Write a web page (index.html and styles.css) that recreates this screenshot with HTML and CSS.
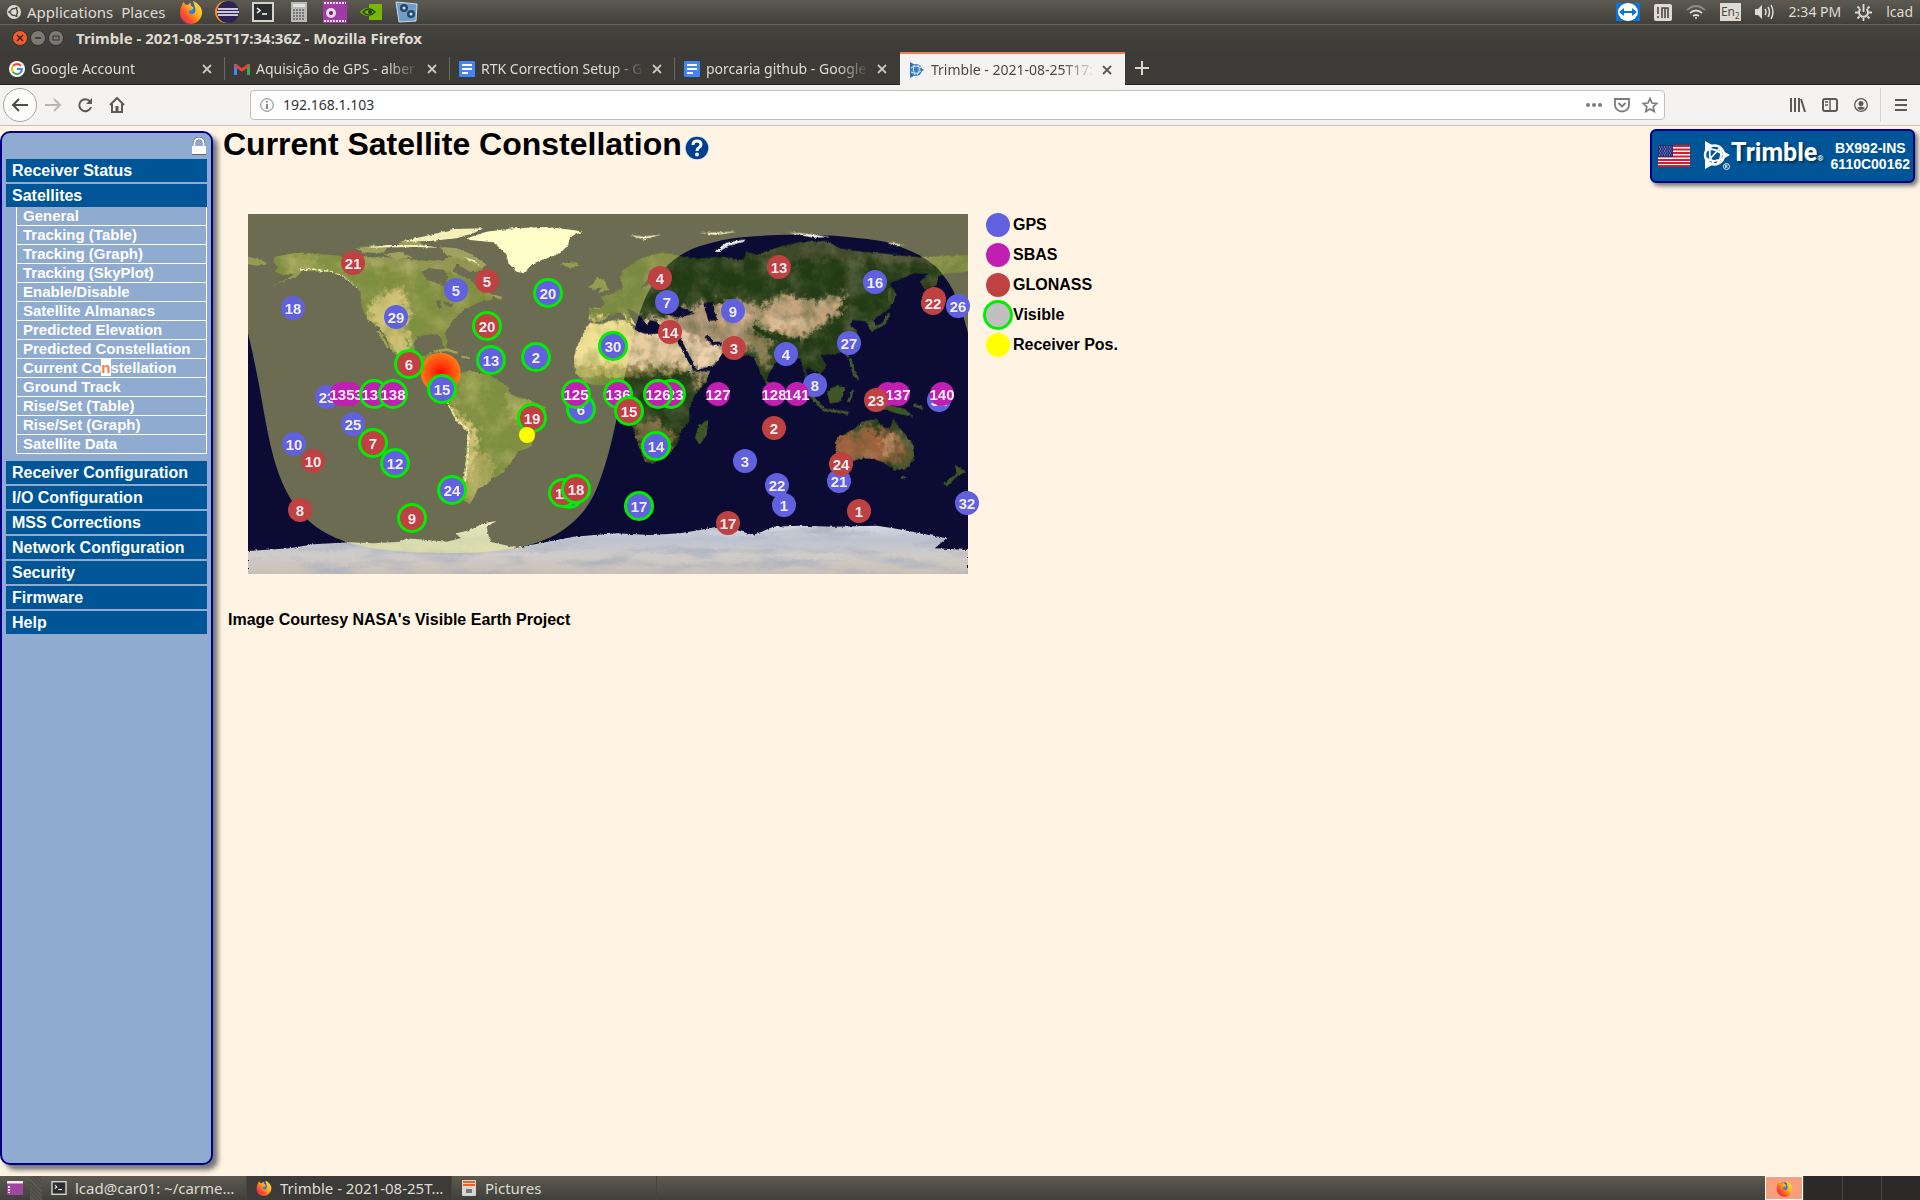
FILE: index.html
```html
<!DOCTYPE html>
<html lang="en">
<head>
<meta charset="utf-8">
<title>Trimble - 2021-08-25T17:34:36Z</title>
<link rel="stylesheet" href="styles.css">
</head>
<body>
<svg class="defs" width="0" height="0" aria-hidden="true">
  <defs>
    <radialGradient id="fxGlobe" cx=".5" cy=".4" r=".6"><stop offset="0" stop-color="#2a9bf0"/><stop offset="1" stop-color="#2b2aa8"/></radialGradient>
    <linearGradient id="fxFlame" x1="1" y1="0" x2="0" y2="1"><stop offset="0" stop-color="#fff04a"/><stop offset=".4" stop-color="#ffb01c"/><stop offset=".7" stop-color="#ff4b2b"/><stop offset="1" stop-color="#e0208a"/></linearGradient>
    <symbol id="firefox" viewBox="0 0 24 24">
      <circle cx="12" cy="12" r="9" fill="url(#fxGlobe)"/>
      <path d="M3 5 C3 3 5 2 5 2 C5 4 7 5 9 5 C10 3 12 3 12 3 C11 5 12 6 14 7 C15 9 13 10 11 10 C9 11 10 14 13 14 C16 14 17 11 16 8 C16 5 14 3 14 1 C19 3 24 8 23 14 C22 20 17 24 12 24 C6 24 1 19 1 13 C1 9 2 7 3 5Z" fill="url(#fxFlame)"/>
    </symbol>
    <symbol id="terminal" viewBox="0 0 22 20">
      <rect x="1" y="1" width="20" height="18" fill="#2c2f2e" stroke="#d3d3cd" stroke-width="2"/>
      <path d="M5 6l3 2.500-3 2.500M10 12h5" fill="none" stroke="#fff" stroke-width="1.500"/>
    </symbol>
    <symbol id="close" viewBox="0 0 12 12"><path d="M2 2l8 8M10 2l-8 8" stroke="currentColor" stroke-width="1.800" fill="none"/></symbol>
    <symbol id="docs" viewBox="0 0 16 16"><rect width="16" height="16" rx="1" fill="#4285f4"/><path d="M3 4h10M3 8h10M3 12h6" stroke="#fff" stroke-width="2"/></symbol>
  </defs>
</svg>

<header class="panel">
  <button class="panel-item"><svg width="14" height="14" viewBox="0 0 14 14"><circle cx="7" cy="7" r="7" fill="#dfdbd2"/><circle cx="7" cy="7" r="3.500" fill="none" stroke="#4b4a44" stroke-width="1.600"/><path d="M7 7L1 7M7 7l3.500-6M7 7l3.500 6" stroke="#dfdbd2" stroke-width="1"/><circle cx="2.400" cy="7" r="1.200" fill="#4b4a44"/><circle cx="9.400" cy="3" r="1.200" fill="#4b4a44"/><circle cx="9.400" cy="11" r="1.200" fill="#4b4a44"/></svg>Applications</button>
  <button class="panel-item">Places</button>
  <div class="launchers">
    <svg width="24" height="24"><use href="#firefox"/></svg>
    <svg width="24" height="24" viewBox="0 0 24 24"><circle cx="11" cy="12" r="11" fill="#f79421"/><circle cx="13" cy="12" r="11" fill="#2c2255"/><path d="M3 9h20M2 12h22M3 15h20" stroke="#fff" stroke-width="1.500"/></svg>
    <svg width="22" height="20"><use href="#terminal"/></svg>
    <svg width="18" height="22" viewBox="0 0 18 22"><rect x="1" y="1" width="16" height="20" fill="#b9b9b5"/><rect x="3" y="3" width="12" height="3" fill="#dfe3da"/><path d="M3 9h12M3 12h12M3 15h12M3 18h12" stroke="#777" stroke-width="2" stroke-dasharray="2 1"/></svg>
    <svg width="24" height="22" viewBox="0 0 24 22"><rect width="24" height="22" fill="#a13aa8"/><path d="M1 2h22M1 20h22" stroke="#f4dff4" stroke-width="2" stroke-dasharray="2 1"/><circle cx="8" cy="12" r="5" fill="#e9d9ea"/><circle cx="8" cy="12" r="2" fill="#6d1d75"/></svg>
    <svg width="22" height="16" viewBox="0 0 22 16"><rect x="9" width="13" height="16" fill="#76b900"/><path d="M0 8q7-8 17 0q-9 8-17 0z" fill="#76b900"/><path d="M3 8q6-6 12 0q-6 6-12 0z" fill="none" stroke="#25400a" stroke-width="1.500"/><circle cx="10" cy="8" r="2" fill="#25400a"/></svg>
    <svg width="24" height="23" viewBox="0 0 24 23"><path d="M1 1l21 2-1 17-17 1z" fill="#6f9dcb" stroke="#cfdbe6"/><circle cx="9" cy="7" r="4" fill="#26496b"/><circle cx="16" cy="13" r="4" fill="#26496b"/><circle cx="9" cy="7" r="1.500" fill="#cfe1f2"/><circle cx="16" cy="13" r="1.500" fill="#cfe1f2"/></svg>
  </div>
  <div class="tray">
    <svg width="24" height="18" viewBox="0 0 24 18"><rect width="24" height="18" fill="#0e74d8"/><ellipse cx="12" cy="9" rx="10" ry="9" fill="#fff"/><path d="M3 9l5-4v3h8V5l5 4-5 4v-3H8v3z" fill="#0e74d8"/></svg>
    <svg width="18" height="17" viewBox="0 0 18 17"><rect width="18" height="17" rx="2" fill="#dfdbd2"/><path d="M4 3v7M4 12v2M8 14V4h6v10M11 4v10" stroke="#4b4a44" stroke-width="1.600" fill="none"/></svg>
    <svg width="20" height="14" viewBox="0 0 20 14" fill="none" stroke-width="1.800"><path d="M1 5q9-8 18 0" stroke="#8d8a80"/><path d="M4 8q6-5 12 0" stroke="#dfdbd2"/><path d="M7 11q3-2 6 0" stroke="#dfdbd2"/><circle cx="10" cy="13" r="1" fill="#dfdbd2"/></svg>
    <span class="lang">En<sub>2</sub></span>
    <svg width="20" height="16" viewBox="0 0 20 16"><path d="M0 5h3l4-4v14l-4-4H0z" fill="#dfdbd2"/><path d="M10 5q2 3 0 6M13 3q3 5 0 10M16 1q4 7 0 14" fill="none" stroke="#dfdbd2" stroke-width="1.500"/></svg>
    <span>2:34 PM</span>
    <svg width="17" height="17" viewBox="0 0 17 17" stroke="#dfdbd2" fill="none"><path d="M5.500 5a4.500 4.500 0 1 0 6 0" stroke-width="2"/><path d="M8.500 0v8M8.500 14v3M0 8.500h3M14 8.500h3M2.500 2.500l2 2M14.500 2.500l-2 2M2.500 14.500l2-2M14.500 14.500l-2-2" stroke-width="1.800"/></svg>
    <span>lcad</span>
  </div>
</header>

<div class="titlebar">
  <button class="win win-close" aria-label="Close"><svg width="8" height="8"><path d="M1 1l6 6M7 1l-6 6" stroke="#4a1d0c" stroke-width="1.500"/></svg></button>
  <button class="win" aria-label="Minimize"><svg width="8" height="8"><path d="M1 4h6" stroke="#33322e" stroke-width="1.500"/></svg></button>
  <button class="win" aria-label="Maximize"><svg width="8" height="8"><rect x="1" y="2" width="6" height="4" fill="none" stroke="#33322e"/></svg></button>
  <strong>Trimble - 2021-08-25T17:34:36Z - Mozilla Firefox</strong>
</div>

<nav class="tabs" aria-label="Tabs">
  <button class="tab"><svg width="16" height="16" viewBox="0 0 16 16"><circle cx="8" cy="8" r="8" fill="#fff"/><g fill="none" stroke-width="2"><path d="M12 5A5 5 0 0 0 4 5" stroke="#ea4335"/><path d="M4 5A5 5 0 0 0 4 11" stroke="#fbbc05"/><path d="M4 11A5 5 0 0 0 11 12" stroke="#34a853"/><path d="M11 12A5 5 0 0 0 13 8H8" stroke="#4285f4"/></g></svg><span class="tab-text">Google Account</span><svg class="x" width="12" height="12"><use href="#close"/></svg></button>
  <button class="tab"><svg width="16" height="12" viewBox="0 0 16 12"><path d="M1.500 12V1" stroke="#4285f4" stroke-width="3"/><path d="M14.500 12V1" stroke="#34a853" stroke-width="3"/><path d="M1 2l7 5 7-5" stroke="#ea4335" stroke-width="3" fill="none"/></svg><span class="tab-text">Aquisição de GPS - alber</span><svg class="x" width="12" height="12"><use href="#close"/></svg></button>
  <button class="tab"><svg width="16" height="16"><use href="#docs"/></svg><span class="tab-text">RTK Correction Setup - G</span><svg class="x" width="12" height="12"><use href="#close"/></svg></button>
  <button class="tab"><svg width="16" height="16"><use href="#docs"/></svg><span class="tab-text">porcaria github - Google</span><svg class="x" width="12" height="12"><use href="#close"/></svg></button>
  <button class="tab active"><svg width="16" height="16" viewBox="0 0 16 16"><path d="M1 0l14 8-14 8z" fill="#2f6fb5"/><circle cx="7" cy="8" r="6" fill="#3d7fc4"/><path d="M2 6q5-4 10 0M2 10q5 3 10-1M5 3q-2 5 1 10M9 3q3 5-1 10" stroke="#dcecfa" fill="none"/></svg><span class="tab-text">Trimble - 2021-08-25T17:3</span><svg class="x" width="12" height="12"><use href="#close"/></svg></button>
  <button class="new-tab" aria-label="New tab"><svg width="14" height="14"><path d="M7 0v14M0 7h14" stroke="#d8d4cc" stroke-width="2"/></svg></button>
</nav>

<div class="toolbar">
  <button class="tool back" aria-label="Back"><svg width="18" height="16"><path d="M17 8H2M8 2L2 8l6 6" fill="none" stroke="#4b4b49" stroke-width="2"/></svg></button>
  <button class="tool" aria-label="Forward"><svg width="18" height="16"><path d="M1 8h15M10 2l6 6-6 6" fill="none" stroke="#b9b8b6" stroke-width="2"/></svg></button>
  <button class="tool" aria-label="Reload"><svg width="16" height="16"><path d="M13 4.500A6 6 0 1 0 14 10" fill="none" stroke="#5a5a58" stroke-width="2"/><path d="M15 1v6H9z" fill="#5a5a58"/></svg></button>
  <button class="tool" aria-label="Home"><svg width="16" height="16"><path d="M1 8l7-7 7 7M3 7v8h10V7" fill="none" stroke="#5a5a58" stroke-width="2"/><path d="M8 15V9" stroke="#5a5a58" stroke-width="3"/></svg></button>
  <div class="urlbar">
    <svg width="14" height="14" fill="none" stroke="#7b7b79"><circle cx="7" cy="7" r="6.300"/><path d="M7 6v5M7 3v1.500" stroke-width="1.800"/></svg>
    <input type="text" value="192.168.1.103" aria-label="Address">
    <svg width="16" height="4" fill="#7b7b79"><circle cx="2" cy="2" r="2"/><circle cx="8" cy="2" r="2"/><circle cx="14" cy="2" r="2"/></svg>
    <svg width="16" height="15" fill="none" stroke="#7b7b79" stroke-width="1.800"><path d="M1 1h14v6a7 6.500 0 0 1-14 0zM4.500 5L8 8.500 11.500 5"/></svg>
    <svg width="16" height="16" viewBox="0 0 16 16" fill="none" stroke="#7b7b79" stroke-width="1.700"><path d="M8 1.500l2 4.500 4.800.5-3.600 3.200 1 4.800L8 12l-4.200 2.500 1-4.800L1.200 6.500 6 6z"/></svg>
  </div>
  <div class="tools-right">
    <svg width="16" height="14" stroke="#5a5a58" stroke-width="2"><path d="M1 0v14M5 0v14M9 0v14M11 1l4 13"/></svg>
    <svg width="16" height="14" fill="none" stroke="#5a5a58"><rect x="1" y="1" width="14" height="12" rx="2" stroke-width="2"/><path d="M8 1v12M3 4h3M3 7h3" stroke-width="1.400"/></svg>
    <svg width="14" height="14"><circle cx="7" cy="7" r="6.300" fill="none" stroke="#5a5a58" stroke-width="1.300"/><circle cx="7" cy="5.500" r="2.500" fill="#5a5a58"/><path d="M3 10q4-3 8 0-4 4-8 0" fill="#5a5a58"/></svg>
    <button class="menu" aria-label="Menu"><svg width="12" height="12"><path d="M0 1h12M0 6h12M0 11h12" stroke="#5a5a58" stroke-width="2"/></svg></button>
  </div>
</div>

<main class="page">
  <nav class="sidebar" aria-label="Receiver menu">
    <svg class="lock" width="14" height="18" viewBox="0 0 14 18"><path d="M2.500 9V6a4.500 4.500 0 0 1 9 0v3" fill="none" stroke="#555" stroke-width="3"/><path d="M2.500 9V6a4.500 4.500 0 0 1 9 0v3" fill="none" stroke="#fff" stroke-width="2"/><path d="M0 9h14v8H0z" fill="#fff"/><path d="M0 17.500h14" stroke="#666"/></svg>
    <a class="menu-main" href="#">Receiver Status</a>
    <a class="menu-main" href="#">Satellites</a>
    <div class="submenu">
      <a href="#">General</a>
      <a href="#">Tracking (Table)</a>
      <a href="#">Tracking (Graph)</a>
      <a href="#">Tracking (SkyPlot)</a>
      <a href="#">Enable/Disable</a>
      <a href="#">Satellite Almanacs</a>
      <a href="#">Predicted Elevation</a>
      <a href="#">Predicted Constellation</a>
      <a href="#">Current Co<mark>n</mark>stellation</a>
      <a href="#">Ground Track</a>
      <a href="#">Rise/Set (Table)</a>
      <a href="#">Rise/Set (Graph)</a>
      <a href="#">Satellite Data</a>
    </div>
    <a class="menu-main" href="#">Receiver Configuration</a>
    <a class="menu-main" href="#">I/O Configuration</a>
    <a class="menu-main" href="#">MSS Corrections</a>
    <a class="menu-main" href="#">Network Configuration</a>
    <a class="menu-main" href="#">Security</a>
    <a class="menu-main" href="#">Firmware</a>
    <a class="menu-main" href="#">Help</a>
  </nav>

  <section class="content">
    <div class="heading">
      <h1>Current Satellite Constellation</h1>
      <a href="#" aria-label="Help"><svg width="26" height="26" viewBox="0 0 26 26"><circle cx="13" cy="13" r="12.500" fill="#e6e9f2"/><circle cx="13" cy="13" r="11.300" fill="#003f8f"/><path d="M9 10q0-4 4-4t4 3.500q0 2-2.500 3.500-1.500 1-1.500 3" fill="none" stroke="#fff" stroke-width="3"/><circle cx="13" cy="19.500" r="1.900" fill="#fff"/></svg></a>
    </div>

    <div class="map-row">
      <div class="map">
        <svg class="earth" viewBox="0 0 2160 1080" role="img" aria-label="World map">
          <defs>
            <filter id="coast" x="0" y="0" width="100%" height="100%"><feTurbulence type="fractalNoise" baseFrequency=".09" numOctaves="4" seed="4" result="n"/><feDisplacementMap in="SourceGraphic" in2="n" scale="9" xChannelSelector="R" yChannelSelector="G"/></filter>
            <filter id="soft" x="-10%" y="-10%" width="120%" height="120%"><feTurbulence type="fractalNoise" baseFrequency=".05" numOctaves="4" seed="9" result="n"/><feGaussianBlur in="SourceGraphic" stdDeviation="6" result="b"/><feDisplacementMap in="b" in2="n" scale="60" xChannelSelector="R" yChannelSelector="G"/></filter>
            <filter id="shade" x="0" y="0" width="100%" height="100%"><feTurbulence type="fractalNoise" baseFrequency=".02" numOctaves="6" seed="21"/><feColorMatrix values="0 0 0 0 .05  0 0 0 0 .09  0 0 0 0 .03  2.600 0 0 0 -1.100"/></filter>
            <filter id="dust" x="0" y="0" width="100%" height="100%"><feTurbulence type="fractalNoise" baseFrequency=".015" numOctaves="6" seed="5"/><feColorMatrix values="0 0 0 0 .66  0 0 0 0 .54  0 0 0 0 .38  0 2.400 0 0 -1.050"/></filter>
            <filter id="snow" x="0" y="0" width="100%" height="100%"><feTurbulence type="fractalNoise" baseFrequency=".006 .03" numOctaves="5" seed="7"/><feColorMatrix values="0 0 0 0 .38  0 0 0 0 .42  0 0 0 0 .5  0 3 0 0 -1.400"/></filter>
            <radialGradient id="sun"><stop offset="0" stop-color="#ff0a00"/><stop offset="1" stop-color="#ff7a18"/></radialGradient>
            <linearGradient id="ice" x1="0" y1="0" x2="0" y2="1"><stop offset="0" stop-color="#e6e6ea"/><stop offset=".35" stop-color="#bcc3d0"/><stop offset=".6" stop-color="#d0ccc9"/><stop offset="1" stop-color="#c8bcb0"/></linearGradient>
            <clipPath id="southPole"><path d="M0 1011 126 1003 196 991 306 985 376 988 456 983 476 973 596 983 636 973 626 958 666 948 706 928 746 921 716 938 726 983 806 1001 876 988 976 968 1106 958 1206 963 1296 958 1356 948 1406 938 1466 948 1516 963 1576 938 1656 935 1756 938 1886 935 1936 943 2016 958 2096 973 2060 1003 2160 1008 2160 1100 0 1100Z"/></clipPath>
            <clipPath id="landWest"><path d="M104 155 180 142 240 148 300 152 350 158 420 155 500 162 560 168 610 165 640 150 670 160 730 190 735 200 690 200 650 175 640 200 690 225 720 250 760 270 755 285 720 290 690 305 665 320 640 345 625 365 615 385 622 410 618 432 608 420 605 398 590 388 560 390 530 395 522 415 525 445 540 455 560 450 570 440 578 450 568 470 570 485 600 490 600 515 610 530 640 528 650 535 620 545 590 520 560 500 530 480 500 470 470 450 450 430 440 400 415 365 385 345 370 320 362 290 362 260 340 240 310 215 270 200 230 200 190 195 170 215 130 230 90 245 140 222 165 208 130 210 105 200 115 185 100 170ZM640 515 670 500 690 495 720 505 750 510 780 530 800 540 815 570 850 580 880 590 915 605 915 625 890 650 885 700 870 725 835 740 815 770 790 800 765 820 760 815 740 840 715 850 700 880 690 895 665 885 660 850 672 800 680 740 682 680 650 650 625 605 618 580 630 550 645 530Z"/></clipPath>
            <clipPath id="landEast"><path d="M-30 352 0 358 40 345 85 345 95 365 140 385 180 375 230 385 245 420 275 470 288 500 330 498 320 530 285 570 268 610 268 650 240 680 235 710 210 745 160 775 135 770 115 720 95 660 85 620 80 590 60 545 20 540-20 540-50 530-75 500-78 460-72 430-50 385ZM-30 310 0 310 15 295 0 275 45 262 70 250 60 215 70 195 120 160 190 142 250 155 300 160 360 155 430 165 440 140 470 150 540 125 600 110 680 108 720 130 780 140 850 145 930 155 1000 155 1104 150 1104 200 1040 205 1015 215 1010 240 975 255 960 230 985 205 940 205 870 235 890 270 870 310 840 330 820 345 830 370 810 378 800 350 760 345 750 360 775 380 765 410 735 440 690 450 660 450 680 480 660 510 630 490 615 490 635 540 650 570 625 545 612 500 600 460 560 460 530 470 505 510 498 535 480 500 460 455 435 450 370 440 345 480 290 495 270 460 245 415 235 380 190 370 170 350 150 345 140 360 120 330 80 310 95 340 110 365 80 345 60 320 30 330 0 350-35 345ZM705 710 720 690 760 675 785 650 830 640 850 665 870 670 880 640 900 670 940 720 943 760 915 795 885 795 855 775 820 760 780 760 740 775 715 765 708 735Z"/></clipPath>
          </defs>
          <rect width="2160" height="1080" fill="#0b0b33"/>
          <g filter="url(#coast)">
            <g transform="translate(-24 -27)">
              <g clip-path="url(#landWest)">
                <rect x="24" y="100" width="1000" height="820" fill="#2b4414"/>
                <g filter="url(#soft)">
                  <path d="M350 150H740L700 215 560 200 400 190Z" fill="#4d5230"/>
                  <path d="M430 255 490 250 510 330 500 400 520 450 500 480 430 400 380 320Z" fill="#ae9668"/>
                  <path d="M100 150 200 155 330 230 230 195 150 200Z" fill="#4b5a2c"/>
                  <path d="M620 510 700 495 760 540 700 560Z" fill="#3d521d"/>
                  <path d="M790 560 880 590 870 690 820 640Z" fill="#57602a"/>
                  <path d="M700 730 780 790 700 890 670 880Z" fill="#6d6638"/>
                  <path d="M618 580 660 640 705 670 715 720 695 790 675 850 665 780 675 690 640 650Z" fill="#c0a27a"/>
                </g>
                <rect x="24" y="100" width="1000" height="820" filter="url(#shade)" opacity=".5"/>
                <rect x="24" y="100" width="1000" height="820" filter="url(#dust)" opacity=".3"/>
                <path d="M180 195 215 192 270 200 310 215 350 250M620 590 650 645 683 670 685 740 675 830" fill="none" stroke="#e6e2d0" stroke-width="5" stroke-dasharray="14 4"/>
              </g>
              <path d="M545 200 570 190 610 195 625 215 615 245 600 238 560 225ZM575 290 600 285 605 310 595 312 590 294ZM610 288 640 300 635 308 612 296Z" fill="#0b0b33"/>
              <path d="M350 130 400 120 440 130 430 145 370 142ZM430 148 480 140 520 158 470 162ZM600 125 650 130 700 150 740 180 720 190 680 165 620 150ZM470 115 530 105 550 120 500 128Z" fill="#606548"/>
              <path d="M480 110 570 90 640 72 730 70 700 85 650 100 570 108ZM380 128 440 120 540 120 600 128 520 126ZM670 155 720 180 700 165Z" fill="#e9e8e0"/>
              <path d="M680 100 740 80 820 70 920 66 1000 75 1028 80 990 95 985 120 960 145 920 160 880 175 850 205 830 200 805 175 800 150 780 130 760 112 720 108 690 105Z" fill="#fffff8"/>
              <path d="M960 175 1010 172 1018 182 985 188ZM1045 245 1058 238 1070 215 1095 225 1105 255 1075 265 1085 245 1065 255ZM24 155 70 165 80 175 50 182 24 178Z" fill="#4b5b2d"/>
              <path d="M580 440 620 434 655 445M665 455 690 458M415 378 445 428M760 272 785 280" stroke="#5e6336" stroke-width="8" fill="none"/>
              <path d="M1050 310 1110 308 1100 340 1060 352 1048 335Z" fill="#85774b"/>
            </g>
            <g transform="translate(1056 -27)">
              <g clip-path="url(#landEast)">
                <rect x="-100" y="80" width="1220" height="740" fill="#243b16"/>
                <g filter="url(#soft)">
                  <path d="M-110 340H290L350 500 240 495 120 490 0 500-110 500Z" fill="#e9cda0"/>
                  <path d="M-80 485 100 480 250 485 260 505 100 510-80 515Z" fill="#8c8048"/>
                  <path d="M230 370 380 400 380 450 290 500Z" fill="#ecd2ad"/>
                  <path d="M270 300 460 285 470 350 450 440 370 440 240 385 190 350Z" fill="#b59a78"/>
                  <path d="M350 300 430 290 450 340 370 350Z" fill="#d5ae88"/>
                  <path d="M440 380 520 400 500 500 480 480Z" fill="#857848"/>
                  <path d="M470 310 550 265 640 290 740 265 720 320 680 350 600 400 500 380 460 345Z" fill="#c4a47c"/>
                  <path d="M480 345 580 335 640 350 600 365 500 365Z" fill="#e0c09a"/>
                  <path d="M280 520 335 490 290 570Z" fill="#b99065"/>
                  <path d="M100 660 170 640 230 690 180 770 130 760Z" fill="#7a6a3d"/>
                  <path d="M440 140 620 100 900 140 1090 150 1060 180 700 165 480 170Z" fill="#3f4a2b"/>
                  <path d="M690 700 790 660 900 690 930 760 870 780 700 770Z" fill="#9b623d"/>
                  <path d="M840 700 880 690 890 750 850 745Z" fill="#c58a61"/>
                  <path d="M900 670 950 730 930 800 880 795 915 740Z" fill="#58592d"/>
                </g>
                <rect x="-100" y="80" width="1220" height="740" filter="url(#shade)" opacity=".45"/>
                <rect x="-100" y="80" width="1220" height="740" filter="url(#dust)" opacity=".25"/>
              </g>
              <path d="M200 310 240 305 285 325 240 337 200 330ZM310 295 340 290 343 318 352 345 325 348 318 322ZM120 250 150 215 145 240Z" fill="#0b0b33"/>
              <path d="M232 395 285 495M318 392 340 415 365 417M100 365 140 383 195 378" stroke="#0b0b33" stroke-width="12" fill="none"/>
              <path d="M460 365 500 390 560 410 600 405" stroke="#233d18" stroke-width="14" fill="none"/>
              <path d="M810 375 850 358 868 325M750 460 760 500 775 525M740 445 745 455M608 548 640 580 668 610M668 614 745 624M760 555 745 590M940 600 970 610M905 815 915 820M500 530 508 545M868 250 870 290" stroke="#41582d" stroke-width="9" fill="none"/>
              <path d="M680 560 710 540 735 545 725 590 690 595ZM820 580 870 600 915 612 940 635 890 625 850 612ZM285 700 295 660 325 645 320 690 300 718ZM1065 780 1097 800 1070 815 1040 845 1030 835 1070 805Z" fill="#3f5528"/>
              <path d="M90 90 130 95 185 88 150 98 135 105ZM345 138 380 112 437 103 430 111 385 122 355 142ZM300 84 410 80 350 90ZM565 82 620 86 690 96 640 98ZM860 112 920 120 880 120Z" fill="#f4f4f0"/>
            </g>
            <g clip-path="url(#southPole)">
              <rect y="910" width="2160" height="190" fill="url(#ice)"/>
              <rect y="910" width="2160" height="190" filter="url(#snow)" opacity=".7"/>
            </g>
          </g>
          <path d="M0 0V358C20 440 35 520 51 613 75 740 95 810 145 880 190 940 260 985 376 1003 470 1018 560 1018 676 1016 800 1010 880 990 940 952 1000 910 1030 870 1056 798 1080 730 1090 690 1106 613L1131 483 1161 343C1175 295 1185 265 1201 233 1225 190 1260 140 1316 113 1360 92 1410 80 1456 73 1560 60 1720 58 1836 73 1900 80 1930 86 1956 98 2030 125 2070 155 2096 198 2120 230 2140 280 2160 358V0Z" fill="#ffff82" fill-opacity=".4"/>
          <circle cx="578" cy="476" r="60" fill="url(#sun)"/>
        </svg>
        <b class="sat glo" style="left:105px;top:49px">21</b>
        <b class="sat gps" style="left:208px;top:76px">5</b>
        <b class="sat glo" style="left:239px;top:67px">5</b>
        <b class="sat gps" style="left:45px;top:94px">18</b>
        <b class="sat gps" style="left:148px;top:103px">29</b>
        <b class="sat gps vis" style="left:300px;top:79px">20</b>
        <b class="sat glo vis" style="left:239px;top:112px">20</b>
        <b class="sat gps vis" style="left:243px;top:146px">13</b>
        <b class="sat gps vis" style="left:288px;top:143px">2</b>
        <b class="sat glo vis" style="left:161px;top:150px">6</b>
        <b class="sat gps vis" style="left:194px;top:175px">15</b>
        <b class="sat gps" style="left:79px;top:183px">23</b>
        <b class="sat sbas" style="left:102px;top:180px">133</b>
        <b class="sat sbas" style="left:94px;top:180px">135</b>
        <b class="sat sbas vis" style="left:126px;top:180px">131</b>
        <b class="sat sbas vis" style="left:145px;top:180px">138</b>
        <b class="sat gps" style="left:105px;top:210px">25</b>
        <b class="sat glo vis" style="left:125px;top:229px">7</b>
        <b class="sat gps" style="left:46px;top:230px">10</b>
        <b class="sat glo" style="left:65px;top:247px">10</b>
        <b class="sat gps vis" style="left:147px;top:249px">12</b>
        <b class="sat gps vis" style="left:204px;top:276px">24</b>
        <b class="sat glo" style="left:52px;top:296px">8</b>
        <b class="sat glo vis" style="left:164px;top:304px">9</b>
        <b class="sat glo vis" style="left:284px;top:204px">19</b>
        <b class="sat rcv" style="left:279px;top:221px"></b>
        <b class="sat gps vis" style="left:333px;top:195px">6</b>
        <b class="sat sbas vis" style="left:328px;top:180px">125</b>
        <b class="sat gps vis" style="left:321px;top:280px"></b>
        <b class="sat glo vis" style="left:315px;top:279px">11</b>
        <b class="sat glo vis" style="left:328px;top:275px">18</b>
        <b class="sat glo" style="left:412px;top:64px">4</b>
        <b class="sat gps" style="left:419px;top:88px">7</b>
        <b class="sat gps" style="left:485px;top:97px">9</b>
        <b class="sat glo" style="left:531px;top:53px">13</b>
        <b class="sat gps" style="left:627px;top:68px">16</b>
        <b class="sat glo" style="left:686px;top:85px"></b>
        <b class="sat glo" style="left:685px;top:89px">22</b>
        <b class="sat gps" style="left:710px;top:92px">26</b>
        <b class="sat glo" style="left:422px;top:118px">14</b>
        <b class="sat gps vis" style="left:365px;top:132px">30</b>
        <b class="sat glo" style="left:486px;top:134px">3</b>
        <b class="sat gps" style="left:538px;top:140px">4</b>
        <b class="sat gps" style="left:601px;top:129px">27</b>
        <b class="sat gps" style="left:567px;top:171px">8</b>
        <b class="sat sbas" style="left:470px;top:180px">127</b>
        <b class="sat sbas" style="left:526px;top:180px">128</b>
        <b class="sat sbas" style="left:549px;top:180px">141</b>
        <b class="sat sbas" style="left:640px;top:180px"></b>
        <b class="sat sbas" style="left:650px;top:180px">137</b>
        <b class="sat glo" style="left:628px;top:186px">23</b>
        <b class="sat gps" style="left:691px;top:186px">31</b>
        <b class="sat sbas" style="left:694px;top:180px">140</b>
        <b class="sat sbas vis" style="left:370px;top:180px">136</b>
        <b class="sat glo vis" style="left:381px;top:197px">15</b>
        <b class="sat sbas vis" style="left:423px;top:180px">123</b>
        <b class="sat sbas vis" style="left:410px;top:180px">126</b>
        <b class="sat glo" style="left:526px;top:214px">2</b>
        <b class="sat gps vis" style="left:408px;top:232px">14</b>
        <b class="sat gps" style="left:497px;top:247px">3</b>
        <b class="sat gps" style="left:529px;top:271px">22</b>
        <b class="sat gps" style="left:536px;top:291px">1</b>
        <b class="sat gps" style="left:591px;top:267px">21</b>
        <b class="sat glo" style="left:593px;top:250px">24</b>
        <b class="sat glo" style="left:611px;top:297px">1</b>
        <b class="sat gps vis" style="left:391px;top:292px">17</b>
        <b class="sat glo" style="left:480px;top:309px">17</b>
        <b class="sat gps" style="left:719px;top:289px">32</b>
      </div>
      <ul class="legend">
        <li><i class="dot gps"></i>GPS</li>
        <li><i class="dot sbas"></i>SBAS</li>
        <li><i class="dot glo"></i>GLONASS</li>
        <li><i class="dot any vis"></i>Visible</li>
        <li><i class="dot pos"></i>Receiver Pos.</li>
      </ul>
    </div>
    <p class="credit">Image Courtesy NASA's Visible Earth Project</p>
  </section>

  <aside class="brand">
    <svg width="32" height="22" viewBox="0 0 32 22"><rect width="32" height="22" fill="#fff"/><path d="M0 1h32M0 4.500h32M0 8h32M0 11.500h32M0 15h32M0 18h32M0 21h32" stroke="#d3202c" stroke-width="1.800"/><rect width="15" height="12" fill="#26307a"/><path d="M1 2h13M2 4h12M1 6h13M2 8h12M1 10h13" stroke="#aab0da" stroke-width="1" stroke-dasharray="1 1.500"/></svg>
    <svg class="globe" width="28" height="30" viewBox="0 0 28 30" fill="none" stroke="#fff"><path d="M2 0L27 14 2 28V20L5 14 2 8Z" fill="#fff" stroke="none"/><circle cx="11.500" cy="14" r="9.500" fill="#005596" stroke-width="2.400"/><path d="M3 10q7-5 17 4M3 17q8 6 17 0M8 6q-4 9 3 17M15 5q7 8-1 18M5 20L17 7" stroke-width="1.800"/><circle cx="23.500" cy="25.500" r="3" stroke-width=".9"/><path d="M22.500 27v-3h1.500v1.500h-1l1.500 1.500" stroke-width=".7"/></svg>
    <span class="wordmark">Trimble<sup>®</sup></span>
    <div class="model">BX992-INS<br>6110C00162</div>
  </aside>
</main>

<footer class="taskbar">
  <button class="show-desktop" aria-label="Show desktop"><svg width="16" height="14"><rect width="16" height="14" fill="#a044a4"/><path d="M0 1h16" stroke="#f2efe6" stroke-width="3"/><path d="M2 5v7" stroke="#f2dff2" stroke-width="2" stroke-dasharray="2 1"/></svg></button>
  <i class="grip"></i>
  <button class="task"><svg width="16" height="14"><use href="#terminal"/></svg>lcad@car01: ~/carme…</button>
  <button class="task current"><svg width="16" height="16"><use href="#firefox"/></svg>Trimble - 2021-08-25T…</button>
  <button class="task"><svg width="16" height="16" viewBox="0 0 16 16"><rect x="1" width="14" height="16" rx="1" fill="#d8d6d0"/><path d="M2 2h12M2 5h12" stroke="#e8641b" stroke-width="2"/><rect x="5" y="9" width="6" height="4" fill="#777"/></svg>Pictures</button>
  <div class="workspaces">
    <button class="on" aria-label="Workspace 1"><svg width="17" height="17"><use href="#firefox"/></svg></button>
    <button aria-label="Workspace 2"></button>
    <button aria-label="Workspace 3"></button>
    <button aria-label="Workspace 4"></button>
  </div>
</footer>
</body>
</html>
```
FILE: styles.css
```css
* { box-sizing: border-box; }
body {
  margin: 0;
  min-height: 100vh;
  display: flex;
  flex-direction: column;
  background: #fff4e4;
  font: 14px/20px "Noto Sans", "Open Sans", sans-serif;
}
svg { display: block; flex: none; }
.defs { position: absolute; }
button { font: inherit; color: inherit; background: none; border: 0; padding: 0; margin: 0; }
a { color: inherit; text-decoration: none; }

/* desktop panel */
.panel {
  height: 25px;
  display: flex;
  align-items: center;
  padding: 0 7px;
  color: #dfdbd2;
  background: linear-gradient(#5c5a50, #403f3a);
  border-bottom: 1px solid #66645c;
}
.panel-item { display: flex; align-items: center; gap: 6px; margin-right: 8px; font-size: 15px; }
.launchers { display: grid; grid-template-columns: repeat(7, 36px); align-items: center; }
.launchers svg { margin: 0 auto; }
.tray { margin-left: auto; display: flex; align-items: center; gap: 14px; }
.lang { background: #dfdbd2; color: #4b4a44; padding: 0 1px; height: 18px; line-height: 18px; font-size: 12px; }
.lang sub { font-size: 8px; line-height: 1px; }

/* window frame */
.titlebar {
  height: 27px;
  display: flex;
  align-items: center;
  gap: 2px;
  padding: 0 12px 2px;
  color: #dfdbd2;
  background: linear-gradient(#45443f, #3c3b37);
}
.titlebar strong { margin-left: 10px; font-size: 15px; }
.win {
  width: 16px;
  height: 16px;
  border-radius: 50%;
  background: #7b7970;
  border: 1px solid #33322e;
  display: grid;
  place-items: center;
}
.win-close { background: #ee5d2e; }
.tabs { display: flex; height: 33px; background: #3c3b37; color: #dfdbd2; border-bottom: 1px solid #262522; }
.tab {
  width: 225px;
  display: flex;
  align-items: center;
  gap: 6px;
  padding: 2px 12px 0 9px;
  position: relative;
  text-align: left;
}
.tab:not(.active)::after { content: ""; position: absolute; right: 0; top: 5px; bottom: 4px; border-right: 1px solid #6b6963; }
.tab:nth-child(4)::after { display: none; }
.tab-text {
  flex: 1;
  min-width: 0;
  overflow: hidden;
  white-space: nowrap;
  -webkit-mask-image: linear-gradient(90deg, #000 80%, transparent);
  mask-image: linear-gradient(90deg, #000 80%, transparent);
}
.tab .x { color: #c9c5bd; }
.tab.active { height: 33px; padding-top: 0; background: #f4f3f1; color: #4a4a48; border-top: 2px solid #ee7f50; }
.tab.active .x { color: #5a5a58; }
.new-tab { width: 34px; display: grid; place-items: center; }

/* navigation toolbar */
.toolbar {
  height: 41px;
  display: flex;
  align-items: center;
  padding: 0 13px 0 3px;
  background: #f4f3f1;
  border-bottom: 1px solid #c6c3bf;
}
.tool { width: 32px; height: 34px; display: grid; place-items: center; }
.back { width: 34px; border: 1px solid #a8a6a3; border-radius: 50%; background: #fcfcfb; }
.urlbar {
  flex: 1;
  margin-left: 117px;
  height: 30px;
  display: flex;
  align-items: center;
  gap: 12px;
  padding: 0 6px 0 9px;
  background: #fff;
  border: 1px solid #c2bfbb;
  border-radius: 4px;
}
.urlbar input { flex: 1; border: 0; outline: 0; padding: 0; margin-left: -3px; font: inherit; color: #333; background: none; }
.tools-right { display: flex; align-items: center; gap: 16px; margin-left: 125px; }
.menu { height: 34px; padding-left: 14px; border-left: 1px solid #d5d3d0; margin-left: -4px; }

/* receiver page */
.page {
  flex: 1;
  display: flex;
  align-items: flex-start;
  font: bold 16px/20px "Liberation Sans", Arial, sans-serif;
  color: #000;
}
.sidebar {
  width: 213px;
  align-self: stretch;
  margin: 5px 0 11px;
  padding: 4px 4px 0;
  display: flex;
  flex-direction: column;
  gap: 2px;
  color: #fff;
  background: #90abd0;
  border: 2px solid #00008b;
  border-radius: 10px;
  box-shadow: 5px 5px 5px #777;
}
.lock { align-self: flex-end; margin: 0 1px 2px; }
.menu-main { height: 23px; line-height: 23px; padding-left: 6px; background: #005596; }
.submenu { margin: -2px 0 5px 10px; border: solid #fff; border-width: 0 1px; font-size: 15px; }
.submenu a { display: block; height: 19px; line-height: 18px; padding-left: 6px; border-bottom: 1px solid #fff; }
.submenu mark { background: #fff; color: #f0804f; }
.content { flex: 1; padding-left: 10px; }
.heading { display: flex; align-items: center; gap: 2px; height: 36px; }
.heading h1 { margin: 0; font-size: 32px; line-height: 36px; }
.heading a { padding-top: 8px; }
.map-row { display: flex; gap: 18px; margin: 48px 0 0 25px; }
.map { position: relative; width: 720px; height: 360px; margin-top: 4px; }
.earth { width: 720px; height: 360px; }
.sat {
  position: absolute;
  width: 24px;
  height: 24px;
  margin: -12px 0 0 -12px;
  border-radius: 50%;
  display: flex;
  justify-content: center;
  font-size: 15px;
  line-height: 26px;
  color: #eeeef4;
}
.dot { width: 24px; height: 24px; border-radius: 50%; }
.gps { background: #6161e0; }
.sbas { background: #c11fb2; }
.glo { background: #c04141; }
.any { background: #c0c0c0; }
.pos, .rcv { background: #ff0; }
.rcv { width: 16px; height: 16px; margin: -8px 0 0 -8px; }
.vis { box-shadow: 0 0 0 3px #00ee00; }
.legend { list-style: none; margin: 0; padding: 0; }
.legend li { display: flex; align-items: center; gap: 3px; height: 30px; }
.credit { margin: 36px 0 0 5px; }

.brand {
  width: 265px;
  height: 54px;
  margin: 3px 5px 0 0;
  padding: 0 3px 0 6px;
  display: flex;
  align-items: center;
  color: #fff;
  background: #005596;
  border: 2px solid #00008b;
  border-radius: 6px;
  box-shadow: 3px 3px 4px #777;
}
.globe { margin-left: 13px; }
.wordmark { font: bold 25px/36px Roboto, "Liberation Sans", sans-serif; text-shadow: 2px 2px 2px #00335c; }
.wordmark sup { font-size: 8px; vertical-align: baseline; }
.model { margin-left: auto; font-size: 14px; line-height: 16px; text-align: center; }

/* bottom taskbar */
.taskbar {
  height: 24px;
  display: flex;
  align-items: center;
  color: #dfdbd2;
  background: linear-gradient(#5c5a50, #403f3a);
}
.show-desktop { width: 30px; display: grid; place-items: center; }
.grip { width: 12px; height: 24px; background: repeating-linear-gradient(45deg, #504e46 0 2px, #5c5a52 2px 3px); }
.task { width: 205px; height: 24px; display: flex; align-items: center; gap: 8px; padding-left: 9px; border-right: 1px solid #45443e; font-size: 15px; white-space: nowrap; }
.task.current { background: #3c3b37; }
.workspaces { margin-left: auto; display: flex; gap: 1px; background: #4a4944; }
.workspaces button { width: 38px; height: 24px; background: #2b2a28; display: grid; place-items: center; }
.workspaces .on { background: #f59f7c; border: 1px solid #fff; }
```
